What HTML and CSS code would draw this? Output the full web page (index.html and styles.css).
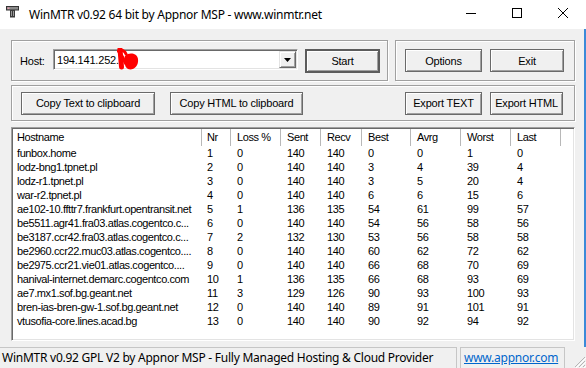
FILE: index.html
```html
<!DOCTYPE html>
<html lang="en">
<head>
  <meta charset="UTF-8" />
  <title>WinMTR v0.92 64 bit by Appnor MSP - www.winmtr.net</title>
  <link rel="stylesheet" href="styles.css">
</head>
<body>
<div class="window">

  <div class="titlebar">
    <svg class="app-icon" viewBox="0 0 16 16">
      <rect x="1.5" y="0.5" width="12" height="3.5" fill="#8a8a8a" stroke="#333" />
      <rect x="2.5" y="1.5" width="2" height="1.5" fill="#e8a0b0" />
      <rect x="5" y="4" width="5" height="7.5" fill="#3a3a3a" />
      <rect x="6" y="5" width="1" height="5" fill="#9a9a9a" />
      <rect x="8" y="5" width="1" height="5" fill="#9a9a9a" />
    </svg>
    <span class="title">WinMTR v0.92 64 bit by Appnor MSP - www.winmtr.net</span>
    <div class="caption-buttons">
      <span class="cap"><svg width="10" height="10" viewBox="0 0 10 10"><path d="M0 5.5H10" stroke="#000" /></svg></span>
      <span class="cap"><svg width="10" height="10" viewBox="0 0 10 10"><rect x="0.5" y="0.5" width="9" height="9" fill="none" stroke="#000" /></svg></span>
      <span class="cap"><svg width="10" height="10" viewBox="0 0 10 10"><path d="M0 0L10 10M10 0L0 10" stroke="#000" /></svg></span>
    </div>
  </div>

  <div class="client">
    <div class="top-row">
      <div class="group host-group">
        <span class="host-label">Host:</span>
        <div class="combo">
          <span class="combo-text">194.141.252.</span>
          <svg class="scribble" viewBox="0 0 24 24">
            <path d="M3 1 L4.5 19" stroke="#ff0000" stroke-width="5" stroke-linecap="round" fill="none" />
            <path d="M1 3 C5 1, 8 3, 9 6" stroke="#ff0000" stroke-width="3" stroke-linecap="round" fill="none" />
            <path d="M8 8 C12 4, 20 5, 21 11 C22 18, 16 23, 11 21 C7 19, 7 12, 8 8 Z" fill="#ff0000" />
            <path d="M5 8 C7 10, 7 14, 9 16" stroke="#ff0000" stroke-width="3" fill="none" />
          </svg>
          <span class="combo-btn">
            <svg width="7" height="4" viewBox="0 0 7 4"><path d="M0 0H7L3.5 4Z" fill="#000" /></svg>
          </span>
        </div>
        <button class="btn btn-default start-btn">Start</button>
      </div>
      <div class="group options-group">
        <button class="btn options-btn">Options</button>
        <button class="btn exit-btn">Exit</button>
      </div>
    </div>

    <div class="group export-group">
      <button class="btn copy-text-btn">Copy Text to clipboard</button>
      <button class="btn copy-html-btn">Copy HTML to clipboard</button>
      <button class="btn export-text-btn">Export TEXT</button>
      <button class="btn export-html-btn">Export HTML</button>
    </div>

    <div class="list">
      <div class="lv-row lv-head">
        <span class="c-host">Hostname</span>
        <span class="c-nr">Nr</span>
        <span>Loss %</span>
        <span>Sent</span>
        <span>Recv</span>
        <span>Best</span>
        <span>Avrg</span>
        <span>Worst</span>
        <span>Last</span>
        <span class="c-fill"></span>
      </div>
      <div id="rows"></div>
    </div>
  </div>

  <div class="statusbar">
    <div class="sb-panel sb-main">WinMTR v0.92 GPL V2 by Appnor MSP - Fully Managed Hosting &amp; Cloud Provider</div>
    <div class="sb-panel sb-link"><a href="#">www.appnor.com</a></div>
    <div class="sb-grip">
      <svg width="14" height="14" viewBox="0 0 14 14">
        <path d="M13 3L3 13M13 7L7 13M13 11L11 13" stroke="#b5b5b5" stroke-width="1" />
        <path d="M14 4L4 14M14 8L8 14M14 12L12 14" stroke="#fff" stroke-width="1" />
      </svg>
    </div>
  </div>

</div>

<script>
  const hops = [
    ['funbox.home', 1, 0, 140, 140, 0, 0, 1, 0],
    ['lodz-bng1.tpnet.pl', 2, 0, 140, 140, 3, 4, 39, 4],
    ['lodz-r1.tpnet.pl', 3, 0, 140, 140, 3, 5, 20, 4],
    ['war-r2.tpnet.pl', 4, 0, 140, 140, 6, 6, 15, 6],
    ['ae102-10.ffttr7.frankfurt.opentransit.net', 5, 1, 136, 135, 54, 61, 99, 57],
    ['be5511.agr41.fra03.atlas.cogentco.c...', 6, 0, 140, 140, 54, 56, 58, 56],
    ['be3187.ccr42.fra03.atlas.cogentco.c...', 7, 2, 132, 130, 53, 56, 58, 58],
    ['be2960.ccr22.muc03.atlas.cogentco....', 8, 0, 140, 140, 60, 62, 72, 62],
    ['be2975.ccr21.vie01.atlas.cogentco....', 9, 0, 140, 140, 66, 68, 70, 69],
    ['hanival-internet.demarc.cogentco.com', 10, 1, 136, 135, 66, 68, 93, 69],
    ['ae7.mx1.sof.bg.geant.net', 11, 3, 129, 126, 90, 93, 100, 93],
    ['bren-ias-bren-gw-1.sof.bg.geant.net', 12, 0, 140, 140, 89, 91, 101, 91],
    ['vtusofia-core.lines.acad.bg', 13, 0, 140, 140, 90, 92, 94, 92]
  ];

  const rows = document.getElementById('rows');
  hops.forEach(hop => {
    const row = document.createElement('div');
    row.className = 'lv-row';
    row.innerHTML = hop.map((v, i) => {
      const cls = i === 0 ? 'c-host' : (i === 1 ? 'c-nr' : '');
      return `<span class="${cls}">${v}</span>`;
    }).join('') + '<span class="c-fill"></span>';
    rows.appendChild(row);
  });
</script>
</body>
</html>
```

FILE: styles.css
```css
body {
  margin: 0;
  background: #fff;
  font-family: "Liberation Sans", Arial, sans-serif;
  color: #000;
}

.window {
  width: 586px;
  height: 368px;
  display: flex;
  flex-direction: column;
  background: #f0f0f0;
  overflow: hidden;
}

/* title bar */
.titlebar {
  height: 29px;
  flex-shrink: 0;
  background: #fff;
  display: flex;
  align-items: center;
}
.app-icon {
  width: 16px;
  height: 16px;
  margin-left: 5px;
  margin-right: 8px;
  margin-top: -2px;
}
.title {
  flex: 1;
  font-family: "Noto Sans", sans-serif;
  font-size: 12px;
  letter-spacing: -0.25px;
  white-space: nowrap;
}
.caption-buttons {
  display: flex;
  align-self: flex-start;
}
.cap {
  width: 46px;
  height: 26px;
  display: flex;
  align-items: center;
  justify-content: center;
}

/* dialog area */
.client {
  flex: 1;
  padding: 11px 9px 6px 11px;
  border-right: 2px solid #3b8ad8;
  display: flex;
  flex-direction: column;
}
.top-row {
  display: flex;
  gap: 7px;
  margin-bottom: 4px;
}
.group {
  box-sizing: border-box;
  border: 1px solid #a0a0a0;
  box-shadow: inset 1px 1px 0 #fff, 1px 1px 0 #fff;
  display: flex;
  align-items: center;
}
.host-group {
  width: 377px;
  height: 41px;
  padding-left: 8px;
}
.options-group {
  width: 180px;
  height: 41px;
  padding-left: 9px;
  gap: 8px;
}
.export-group {
  height: 36px;
  padding: 0 11px 0 9px;
  gap: 8px;
  margin-bottom: 6px;
}

.host-label {
  width: 33px;
  font-size: 11px;
  letter-spacing: -0.2px;
}

.combo {
  position: relative;
  box-sizing: border-box;
  width: 245px;
  height: 21px;
  margin-bottom: 2px;
  background: #fff;
  border: 1px solid;
  border-color: #a0a0a0 #fff #fff #a0a0a0;
  box-shadow: inset 1px 1px 0 #696969, inset -1px -1px 0 #e3e3e3;
  display: flex;
  align-items: center;
  padding: 1px;
}
.combo-text {
  flex: 1;
  padding-left: 2px;
  font-size: 11px;
  letter-spacing: -0.2px;
}
.scribble {
  position: absolute;
  left: 63px;
  top: -2px;
  width: 24px;
  height: 24px;
}
.combo-btn {
  box-sizing: border-box;
  width: 17px;
  height: 17px;
  background: #f0f0f0;
  border: 1px solid;
  border-color: #e3e3e3 #696969 #696969 #e3e3e3;
  box-shadow: inset 1px 1px 0 #fff, inset -1px -1px 0 #a0a0a0;
  display: flex;
  align-items: center;
  justify-content: center;
}

.btn {
  box-sizing: border-box;
  height: 23px;
  padding: 0;
  font-family: "Liberation Sans", Arial, sans-serif;
  font-size: 11px;
  letter-spacing: -0.2px;
  color: #000;
  background: #f0f0f0;
  border: 1px solid #6a6a6a;
  box-shadow: inset 1px 1px 0 #fff, inset -1px -1px 0 #a0a0a0;
}
.btn-default {
  border: 2px solid #5c5c5c;
  height: 24px;
}
.start-btn { width: 75px; margin-left: 7px; }
.options-btn { width: 77px; }
.exit-btn { width: 74px; }
.copy-text-btn { width: 134px; }
.copy-html-btn { width: 133px; margin-left: 7px; }
.export-text-btn { width: 77px; margin-left: auto; }
.export-html-btn { width: 73px; }

/* list view */
.list {
  box-sizing: border-box;
  height: 214px;
  padding: 1px;
  background: #fff;
  border: 1px solid;
  border-color: #a0a0a0 #fff #fff #a0a0a0;
  box-shadow: inset 1px 1px 0 #696969, inset -1px -1px 0 #e3e3e3;
  font-size: 11px;
  letter-spacing: -0.4px;
}
.lv-row {
  display: grid;
  grid-template-columns: 189px 29px 50px 40px 41px 49px 50px 50px 50px 1fr;
  height: 14px;
  line-height: 14px;
}
.lv-row span {
  padding-left: 6px;
  white-space: nowrap;
  overflow: hidden;
}
.lv-row .c-host { padding-left: 4px; }
.lv-row .c-nr { padding-left: 5px; }
.lv-head {
  height: 17px;
  line-height: 17px;
}
.lv-head span {
  box-sizing: border-box;
  border-right: 1px solid #b8b8b8;
}
.lv-head .c-fill {
  border-right: none;
}

/* status bar */
.statusbar {
  height: 21px;
  flex-shrink: 0;
  display: flex;
  gap: 3px;
  font-family: "Noto Sans", sans-serif;
  font-size: 12px;
  letter-spacing: -0.25px;
}
.sb-panel {
  box-sizing: border-box;
  border: 1px solid #c6c6c6;
  border-bottom: none;
  line-height: 19px;
  white-space: nowrap;
  overflow: hidden;
}
.sb-main {
  width: 457px;
  padding-left: 2px;
  border-left: none;
}
.sb-link {
  width: 105px;
  padding-left: 3px;
}
.sb-link a {
  color: #0066cc;
}
.sb-grip {
  flex: 1;
  display: flex;
  align-items: flex-end;
  justify-content: flex-end;
}
```
